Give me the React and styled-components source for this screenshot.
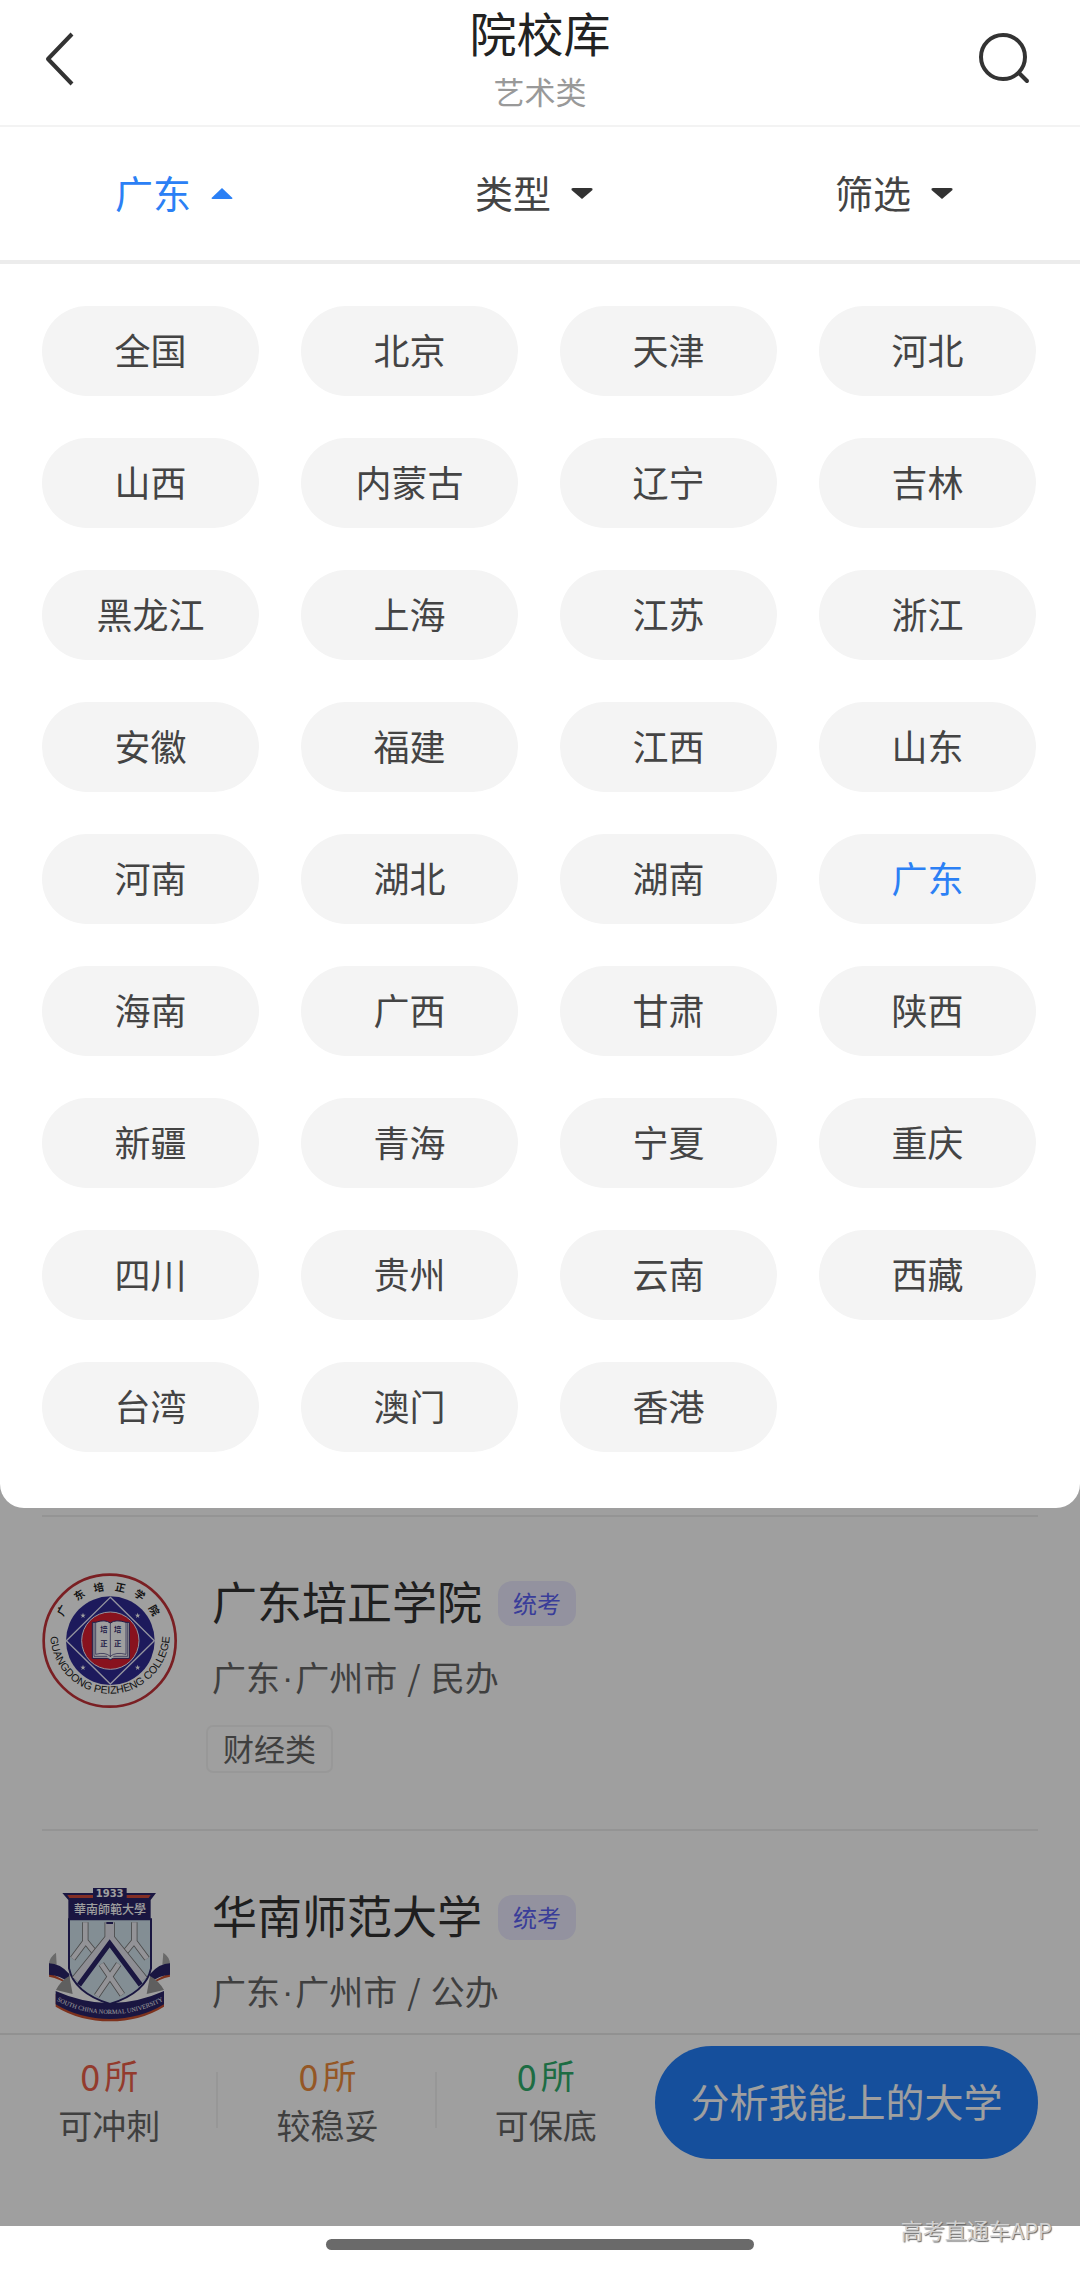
import React, { useState } from 'react';
import styled, { createGlobalStyle } from 'styled-components';

const GlobalStyle = createGlobalStyle`
  * {
    box-sizing: border-box;
  }

  body {
    margin: 0;
    background: #fff;
    font-family: 'Noto Sans CJK SC', sans-serif;
    color: #333;
  }

  button {
    margin: 0;
    padding: 0;
    border: none;
    background: none;
    font-family: inherit;
    color: inherit;
    cursor: pointer;
  }
`;

const Page = styled.div`
  min-height: 100vh;
  display: flex;
  flex-direction: column;
`;

const Header = styled.header`
  display: grid;
  grid-template-columns: 136px 1fr 136px;
  align-items: center;
  height: 127px;
  padding-bottom: 8px;
  border-bottom: 2px solid #f3f3f3;
`;

const IconButton = styled.button`
  display: flex;
  justify-content: center;
  width: 120px;
`;

const Heading = styled.div`
  text-align: center;
`;

const Title = styled.h1`
  margin: 0;
  font-size: 47px;
  line-height: 64px;
  font-weight: 400;
  color: #222;
`;

const Subtitle = styled.p`
  margin: 0;
  font-size: 31px;
  line-height: 54px;
  color: #999;
`;

const FilterBar = styled.nav`
  display: grid;
  grid-template-columns: repeat(3, 1fr);
  height: 137px;
  border-bottom: 4px solid #ececec;
`;

const FilterButton = styled.button`
  display: flex;
  align-items: center;
  justify-content: center;
  gap: 8px;
  padding-bottom: 4px;
  font-size: 38px;
  color: ${props => props.$active ? '#2b80f5' : '#444'};

  svg {
    margin-top: 4px;
    fill: ${props => props.$active ? '#2b80f5' : '#333'};
  }
`;

const Stage = styled.main`
  position: relative;
  flex: 1;
  display: flex;
  flex-direction: column;
`;

const Scrim = styled.div`
  position: absolute;
  inset: 0;
  background: rgba(0, 0, 0, 0.376);
`;

const RegionPanel = styled.section`
  position: relative;
  z-index: 1;
  display: grid;
  grid-template-columns: repeat(4, 1fr);
  gap: 42px;
  padding: 42px 44px 56px 42px;
  border-radius: 0 0 24px 24px;
  background: #fff;
`;

const RegionButton = styled.button`
  height: 90px;
  padding-bottom: 4px;
  border-radius: 45px;
  background: #f4f4f4;
  font-size: 36px;
  color: ${props => props.$active ? '#2b80f5' : '#444'};
`;

const SchoolList = styled.ul`
  flex: 1 1 0;
  min-height: 480px;
  margin: 0;
  padding: 7px 42px 0;
  overflow: hidden;
  list-style: none;
`;

const SchoolItem = styled.li`
  display: flex;
  gap: 35px;
  height: 314px;
  padding-top: 56px;
  border-top: 2px solid #eee;
`;

const SchoolInfo = styled.div`
  display: flex;
  flex-direction: column;
  align-items: flex-start;
`;

const NameRow = styled.div`
  display: flex;
  align-items: center;
  gap: 16px;
  height: 60px;
`;

const SchoolName = styled.h2`
  margin: 0;
  padding-bottom: 4px;
  font-size: 45px;
  line-height: 56px;
  font-weight: 400;
  color: #333;
`;

const Badge = styled.span`
  padding: 0 15px 2px;
  border-radius: 14px;
  background: #ecebff;
  font-size: 24px;
  line-height: 43px;
  color: #5c62f6;
`;

const Meta = styled.p`
  display: flex;
  margin: 20px 0 24px;
  font-size: 34px;
  line-height: 48px;
  color: #666;
`;

const Dot = styled.span`
  padding: 0 2px;
  font-family: 'Liberation Sans', sans-serif;
`;

const Slash = styled.span`
  padding: 0 10px;
`;

const Tag = styled.span`
  margin-left: -6px;
  padding: 0 15px 2px;
  border: 2px solid #f4f4f4;
  border-radius: 7px;
  font-size: 31px;
  line-height: 42px;
  color: #666;
`;

const BottomBar = styled.footer`
  display: flex;
  align-items: flex-start;
  height: 193px;
  padding: 11px 42px 0 0;
  border-top: 2px solid #e8e8e8;
`;

const Stats = styled.div`
  flex: 1;
  display: grid;
  grid-template-columns: repeat(3, 1fr);
  align-items: center;
  padding-top: 4px;
`;

const Stat = styled.div`
  display: flex;
  flex-direction: column;
  align-items: center;
  font-size: 34px;
  line-height: 50px;
  color: #666;
  background: linear-gradient(#f2f2f2, #f2f2f2) no-repeat right center;
  background-size: ${props => props.$divided ? '2px 56px' : '0 0'};
`;

const StatValue = styled.span`
  display: flex;
  gap: 4px;
  color: ${props => props.$color};
`;

const StatNumber = styled.span`
  font-size: 36px;
`;

const AnalyzeButton = styled.button`
  width: 383px;
  height: 113px;
  padding-bottom: 6px;
  border-radius: 57px;
  background: #237ffa;
  font-size: 39px;
  color: #fff;
`;

const HomeArea = styled.div`
  position: relative;
  display: flex;
  justify-content: center;
  height: 45px;
  padding-top: 13px;
`;

const HomeIndicator = styled.div`
  width: 428px;
  height: 11px;
  border-radius: 6px;
  background: #6a6a6a;
`;

const Watermark = styled.span`
  position: absolute;
  right: 28px;
  bottom: 26px;
  font-size: 22px;
  line-height: 32px;
  color: #d0d0d0;
  text-shadow: 1px 1px 1px #666;
`;

const Logo = styled.svg`
  flex: none;
  width: 135px;
  height: 135px;
`;

const BackIcon = () => (
  <svg width="40" height="60" viewBox="0 0 40 60" fill="none" stroke="#333" strokeWidth="4">
    <path d="M32 5 L8 30 L32 55" strokeLinejoin="round" />
  </svg>
);

const SearchIcon = () => (
  <svg width="60" height="60" viewBox="0 0 60 60" fill="none" stroke="#333" strokeWidth="4">
    <circle cx="29" cy="28" r="22" />
    <path d="M45 44 L53 52" strokeLinecap="round" />
  </svg>
);

const Caret = ({ up }) => (
  <svg width="46" height="14" viewBox="0 0 46 14">
    {up
      ? <path d="M23 1 L33.500 11 Q33.500 12 32.500 12 H13.500 Q12.500 12 12.500 11 Z" />
      : <path d="M23 12 L33.500 3 Q34 1 32 1 H14 Q12 1 12.500 3 Z" />}
  </svg>
);

const sealChars = [
  ['广', 97, 150, -60],
  ['东', 148, 104, -35],
  ['培', 206, 82, -12],
  ['正', 271, 82, 12],
  ['学', 329, 104, 35],
  ['院', 372, 150, 60],
];

const stars = [[159, 165], [323, 165], [159, 321], [323, 321]];

const PeizhengLogo = () => (
  <Logo viewBox="36 38 405 405" role="img" aria-label="广东培正学院">
    <circle cx="239" cy="241" r="198" fill="#fff" stroke="#c43238" strokeWidth="8" />
    <circle cx="241" cy="241" r="133" fill="#2f2b94" />
    <path d="M241 111 L373 241 L241 371 L109 241 Z" fill="none" stroke="#eef" strokeWidth="4" />
    <circle cx="241" cy="241" r="86" fill="#da1d30" stroke="#eef" strokeWidth="3" />
    {stars.map(([x, y]) => (
      <path
        key={`${x}-${y}`}
        transform={`translate(${x} ${y})`}
        d="M0 -8 L2 -2 L8 -2 L3 2 L5 8 L0 4 L-5 8 L-3 2 L-8 -2 L-2 -2 Z"
        fill="#fff"
      />
    ))}
    <path
      d="M187 186 H197 Q225 176 241 188 Q257 176 288 186 H298 V294 H250 L241 298 L232 294 H187 Z"
      fill="#fff"
      stroke="#2f2b70"
      strokeWidth="3"
    />
    <path
      d="M241 188 V290 M197 186 V282 Q225 274 241 288 Q257 274 288 282 V186 M192 186 V288 H232 M293 186 V288 H250"
      fill="none"
      stroke="#2f2b70"
      strokeWidth="2"
    />
    <g fontSize="22" fontWeight="700" fill="#2f2b70" textAnchor="middle">
      <text x="222" y="216">培</text>
      <text x="263" y="216">培</text>
      <text x="222" y="256">正</text>
      <text x="263" y="256">正</text>
    </g>
    <g fontSize="31" fontWeight="700" fill="#222" textAnchor="middle">
      {sealChars.map(([char, x, y, angle]) => (
        <text key={char} transform={`translate(${x} ${y}) rotate(${angle})`} y="11">{char}</text>
      ))}
    </g>
    <path id="seal-arc" d="M61 221 A179 179 0 1 0 419 221" fill="none" />
    <text fontFamily="Liberation Sans, sans-serif" fontSize="32" fill="#222" textAnchor="middle">
      <textPath href="#seal-arc" startOffset="50%">GUANGDONG PEIZHENG COLLEGE</textPath>
    </text>
  </Logo>
);

const pipes = 'M166 157 V215 L128 266 M166 213 L196 250 M313 157 V215 L351 266 M313 213 L283 250 M214 282 L277 374 M266 282 L200 378';
const roof = 'M239 157 V205 L138 330 M239 205 L340 330';

const NormalUniversityLogo = () => (
  <Logo viewBox="36 51 405 405" role="img" aria-label="华南师范大学">
    <path d="M78 248 Q58 262 57 282 L80 284 Z M400 248 Q420 262 420 282 L397 284 Z" fill="#aaa" />
    <path d="M57 320 Q90 326 117 346 V338 L58 308 Z M420 320 Q388 326 361 346 V338 L419 308 Z" fill="#c8502f" />
    <path d="M57 280 Q90 280 118 312 V338 Q90 316 57 314 Z M420 280 Q388 280 360 312 V338 Q388 316 420 314 Z" fill="#2a2468" />
    <path d="M118 318 Q92 332 78 360 L128 372 Z M360 318 Q386 332 402 360 L350 372 Z" fill="#999" />
    <path d="M117 148 V295 Q132 368 240 402 Q348 368 363 295 V148 Z" fill="#d2e4ee" stroke="#2a2468" strokeWidth="6" />
    <g fill="none">
      <path d={pipes} stroke="#777" strokeWidth="19" />
      <path d={pipes} stroke="#ececf2" strokeWidth="14" />
      <path d={roof} stroke="#777" strokeWidth="31" />
      <path d={roof} stroke="#e4e4ee" strokeWidth="26" />
      <path d="M147 345 L239 220 L332 345" stroke="#2a2468" strokeWidth="15" />
    </g>
    <path d="M229 156 H249 V162 H229 Z" fill="#2a2468" />
    <path d="M97 69 H378 L362 90 V150 H115 V90 Z" fill="#2a2468" />
    <path d="M112 75 H362 L356 84 H118 Z" fill="#d24a3c" />
    <path d="M189 54 H290 V86 H189 Z" fill="#2a2468" />
    <text x="239" y="80" fontFamily="DejaVu Sans, sans-serif" fontSize="30" fontWeight="700" fill="#fff" textAnchor="middle">1933</text>
    <text x="240" y="132" fontFamily="Noto Sans CJK TC, sans-serif" fontSize="36" fontWeight="500" fill="#fff" textAnchor="middle">華南師範大學</text>
    <path d="M77 372 Q155 405 240 405 Q325 405 402 372 V410 Q330 454 240 454 Q150 454 77 410 Z" fill="#c8502f" />
    <path d="M77 363 Q155 398 240 400 Q325 398 402 363 V403 Q330 447 240 447 Q150 447 77 403 Z" fill="#2a2468" />
    <path id="ribbon-arc" d="M80 392 Q155 432 240 432 Q325 432 400 392" fill="none" />
    <text fontFamily="Liberation Serif, serif" fontSize="19" fill="#fff" textAnchor="middle">
      <textPath href="#ribbon-arc" startOffset="50%">SOUTH CHINA NORMAL UNIVERSITY</textPath>
    </text>
  </Logo>
);

const regions = [
  '全国', '北京', '天津', '河北',
  '山西', '内蒙古', '辽宁', '吉林',
  '黑龙江', '上海', '江苏', '浙江',
  '安徽', '福建', '江西', '山东',
  '河南', '湖北', '湖南', '广东',
  '海南', '广西', '甘肃', '陕西',
  '新疆', '青海', '宁夏', '重庆',
  '四川', '贵州', '云南', '西藏',
  '台湾', '澳门', '香港',
];

const schools = [
  { name: '广东培正学院', city: '广州市', type: '民办', tag: '财经类', logo: PeizhengLogo },
  { name: '华南师范大学', city: '广州市', type: '公办', logo: NormalUniversityLogo },
];

const stats = [
  { label: '可冲刺', color: '#ec5f48' },
  { label: '较稳妥', color: '#ee8c3c' },
  { label: '可保底', color: '#2fae6c' },
];

const App = () => {
  const [region, setRegion] = useState('广东');

  return (
    <Page>
      <GlobalStyle />
      <Header>
        <IconButton type="button" aria-label="返回"><BackIcon /></IconButton>
        <Heading>
          <Title>院校库</Title>
          <Subtitle>艺术类</Subtitle>
        </Heading>
        <IconButton type="button" aria-label="搜索"><SearchIcon /></IconButton>
      </Header>

      <FilterBar>
        <FilterButton type="button" $active>{region}<Caret up /></FilterButton>
        <FilterButton type="button">类型<Caret /></FilterButton>
        <FilterButton type="button">筛选<Caret /></FilterButton>
      </FilterBar>

      <Stage>
        <RegionPanel>
          {regions.map(name => (
            <RegionButton
              key={name}
              type="button"
              $active={name === region}
              onClick={() => setRegion(name)}
            >
              {name}
            </RegionButton>
          ))}
        </RegionPanel>

        <SchoolList>
          {schools.map(school => (
            <SchoolItem key={school.name}>
              <school.logo />
              <SchoolInfo>
                <NameRow>
                  <SchoolName>{school.name}</SchoolName>
                  <Badge>统考</Badge>
                </NameRow>
                <Meta>
                  广东<Dot>·</Dot>{school.city}<Slash>/</Slash>{school.type}
                </Meta>
                {school.tag && <Tag>{school.tag}</Tag>}
              </SchoolInfo>
            </SchoolItem>
          ))}
        </SchoolList>

        <BottomBar>
          <Stats>
            {stats.map((stat, index) => (
              <Stat key={stat.label} $divided={index < stats.length - 1}>
                <StatValue $color={stat.color}><StatNumber>0</StatNumber>所</StatValue>
                <span>{stat.label}</span>
              </Stat>
            ))}
          </Stats>
          <AnalyzeButton type="button">分析我能上的大学</AnalyzeButton>
        </BottomBar>
        <Scrim />
      </Stage>

      <HomeArea>
        <HomeIndicator />
        <Watermark>高考直通车APP</Watermark>
      </HomeArea>
    </Page>
  );
};

export default App;
